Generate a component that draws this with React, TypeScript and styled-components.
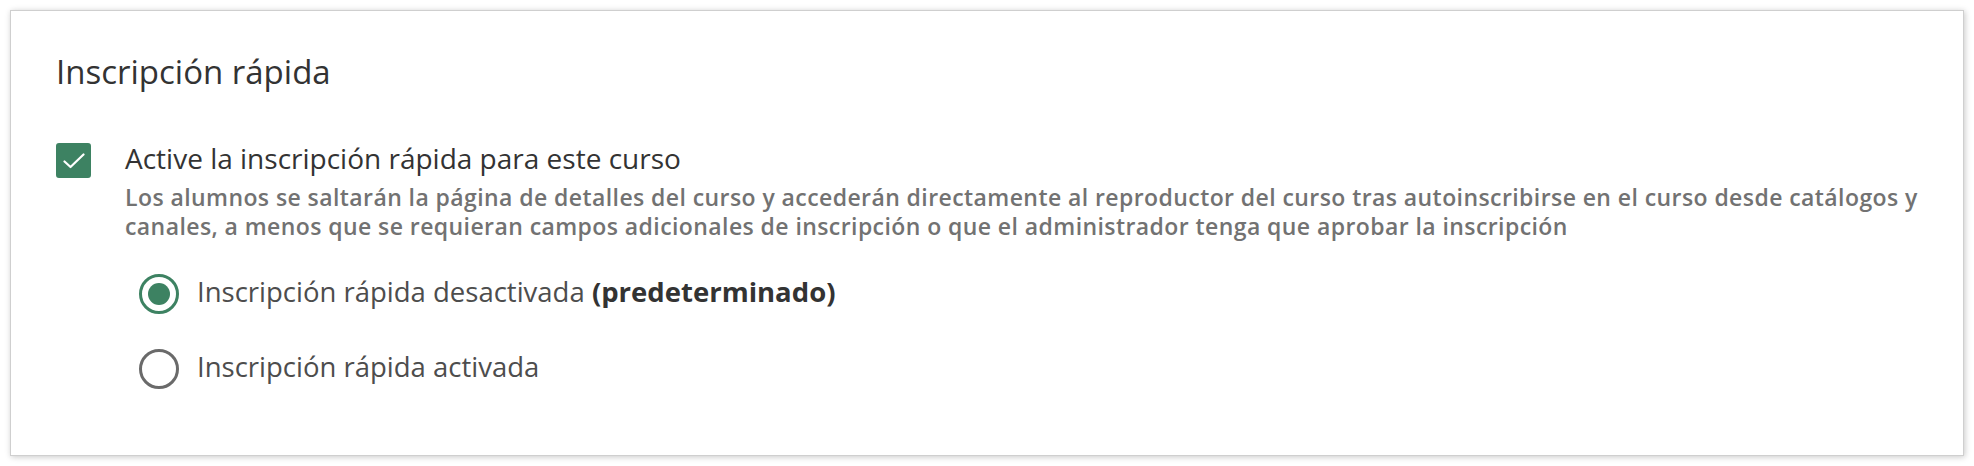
import React, { useState } from 'react';
import styled, { createGlobalStyle } from 'styled-components';

const GlobalStyle = createGlobalStyle`
  html, body {
    margin: 0;
    padding: 0;
    background: #ffffff;
  }
  body {
    font-family: "Open Sans", "Noto Sans", sans-serif;
    color: #333333;
  }
`;

const Card = styled.section`
  box-sizing: border-box;
  margin: 10px;
  height: 446px;
  padding: 41px 28px 0 45px;
  background: #ffffff;
  border: 1px solid #cfcfcf;
  box-shadow: 1px 1px 6px rgba(0, 0, 0, 0.22);
`;

const Title = styled.h2`
  margin: 0 0 50px 0;
  font-size: 33px;
  font-weight: 400;
  line-height: 40px;
  color: #333333;
`;

const CheckRow = styled.div`
  display: flex;
  align-items: flex-start;
  gap: 34px;
`;

const CheckBox = styled.button<{ $checked: boolean }>`
  flex: none;
  box-sizing: border-box;
  width: 35px;
  height: 35px;
  margin-top: 1px;
  padding: 0;
  border-radius: 3px;
  border: 2px solid ${p => (p.$checked ? '#3d8262' : '#666666')};
  background: ${p => (p.$checked ? '#3d8262' : '#ffffff')};
  display: flex;
  align-items: center;
  justify-content: center;
  cursor: pointer;
`;

const TextCol = styled.div`
  display: flex;
  flex-direction: column;
`;

const Label = styled.label`
  font-size: 28px;
  line-height: 30px;
  margin-top: 1px;
  color: #333333;
`;

const Description = styled.p`
  margin: 10px 0 0 0;
  font-size: 23px;
  line-height: 29px;
  font-weight: 600;
  letter-spacing: 0.42px;
  color: #727272;
`;

const RadioGroup = styled.div`
  display: flex;
  flex-direction: column;
  gap: 35px;
  margin: 33px 0 0 14px;
`;

const RadioRow = styled.label`
  display: flex;
  align-items: center;
  gap: 18px;
  min-height: 40px;
  font-size: 27.5px;
  line-height: 36px;
  color: #4d4d4d;
  cursor: pointer;
`;

const RadioText = styled.span`
  padding-bottom: 4px;
`;

const RadioCircle = styled.span<{ $checked: boolean }>`
  flex: none;
  box-sizing: border-box;
  width: 40px;
  height: 40px;
  border-radius: 50%;
  border: 3px solid ${p => (p.$checked ? '#3d8262' : '#6a6a6a')};
  display: flex;
  align-items: center;
  justify-content: center;

  &::after {
    content: '';
    display: ${p => (p.$checked ? 'block' : 'none')};
    width: 22px;
    height: 22px;
    border-radius: 50%;
    background: #3d8262;
  }
`;

const Strong = styled.strong`
  font-weight: 700;
  color: #333333;
`;

function CheckMark() {
  return (
    <svg width="22" height="16" viewBox="0 0 22 16" fill="none">
      <path d="M1.5 8.5 L7.5 14 L20.5 1.5" stroke="#ffffff" strokeWidth="2.2" strokeLinecap="round" strokeLinejoin="round" />
    </svg>
  );
}

function App() {
  const [enabled, setEnabled] = useState(true);
  const [mode, setMode] = useState<'off' | 'on'>('off');

  return (
    <>
      <GlobalStyle />
      <Card>
        <Title>Inscripción rápida</Title>
        <CheckRow>
          <CheckBox $checked={enabled} onClick={() => setEnabled(!enabled)} aria-label="Activar">
            {enabled && <CheckMark />}
          </CheckBox>
          <TextCol>
            <Label>Active la inscripción rápida para este curso</Label>
            <Description>
              Los alumnos se saltarán la página de detalles del curso y accederán directamente al reproductor del curso tras autoinscribirse en el curso desde catálogos y canales, a menos que se requieran campos adicionales de inscripción o que el administrador tenga que aprobar la inscripción
            </Description>
            <RadioGroup>
              <RadioRow onClick={() => setMode('off')}>
                <RadioCircle $checked={mode === 'off'} />
                <RadioText>
                  Inscripción rápida desactivada <Strong>(predeterminado)</Strong>
                </RadioText>
              </RadioRow>
              <RadioRow onClick={() => setMode('on')}>
                <RadioCircle $checked={mode === 'on'} />
                <RadioText>Inscripción rápida activada</RadioText>
              </RadioRow>
            </RadioGroup>
          </TextCol>
        </CheckRow>
      </Card>
    </>
  );
}

export default App;
